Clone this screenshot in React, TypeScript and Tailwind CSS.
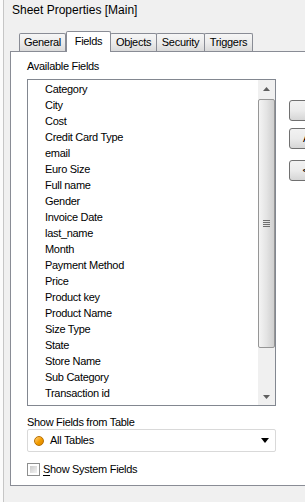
import React from 'react';

const fields = [
  'Category',
  'City',
  'Cost',
  'Credit Card Type',
  'email',
  'Euro Size',
  'Full name',
  'Gender',
  'Invoice Date',
  'last_name',
  'Month',
  'Payment Method',
  'Price',
  'Product key',
  'Product Name',
  'Size Type',
  'State',
  'Store Name',
  'Sub Category',
  'Transaction id',
];

const tabs = [
  { label: 'General', w: 'w-[47px]' },
  { label: 'Fields', w: 'w-[45px]', active: true },
  { label: 'Objects', w: 'w-[47px]' },
  { label: 'Security', w: 'w-[49px]' },
  { label: 'Triggers', w: 'w-[49px]' },
];

function Tab({ label, w, active }: { label: string; w: string; active?: boolean }) {
  if (active) {
    return (
      <div
        className={`${w} h-[21px] -mb-px relative z-10 bg-white border border-b-0 border-[#898c95] rounded-t-[2px] flex items-center justify-center pb-[2px]`}
      >
        {label}
      </div>
    );
  }
  return (
    <div
      className={`${w} h-[18px] -ml-px first:ml-0 bg-gradient-to-b from-[#f6f6f6] via-[#ececec] to-[#dadada] border border-b-0 border-[#898c95] rounded-t-[2px] flex items-center justify-center`}
    >
      {label}
    </div>
  );
}

function ScrollBar() {
  return (
    <div className="w-[17px] h-full bg-[#f0f0f0] flex flex-col">
      {/* up arrow */}
      <div className="h-[18px] flex items-center justify-center">
        <svg width="7" height="4" viewBox="0 0 7 4">
          <path d="M0 4 L3.5 0 L7 4 Z" fill="#5f5f5f" />
        </svg>
      </div>
      {/* thumb */}
      <div className="mx-0 mt-[1px] h-[249px] rounded-[2px] border border-[#969696] bg-gradient-to-r from-[#f4f4f4] via-[#e4e4e4] to-[#cfcfcf] flex items-center justify-center">
        <div className="flex flex-col gap-[1px]">
          <div className="w-[7px] h-[1px] bg-[#6f6f6f]" />
          <div className="w-[7px] h-[1px] bg-[#6f6f6f]" />
          <div className="w-[7px] h-[1px] bg-[#6f6f6f]" />
          <div className="w-[7px] h-[1px] bg-[#6f6f6f]" />
        </div>
      </div>
      <div className="flex-1" />
      {/* down arrow */}
      <div className="h-[17px] flex items-center justify-center">
        <svg width="7" height="4" viewBox="0 0 7 4">
          <path d="M0 0 L7 0 L3.5 4 Z" fill="#5f5f5f" />
        </svg>
      </div>
    </div>
  );
}

function SideButton({ label }: { label: string }) {
  return (
    <div className="w-[75px] h-[21px] rounded-[3px] border border-[#707070] bg-gradient-to-b from-[#f2f2f2] via-[#ebebeb] to-[#d6d6d6] flex items-center justify-center whitespace-nowrap">
      {label}
    </div>
  );
}

export default function App() {
  return (
    <div
      className="w-[305px] h-[502px] overflow-hidden bg-[#fbfbfb] pl-[3px] text-[11px] tracking-[-0.3px] text-black"
      style={{ fontFamily: '"Liberation Sans", Arial, sans-serif' }}
    >
      <div className="h-full border-l border-[#c6c6c6] bg-[#f0f0f0] flex flex-col">
        {/* title */}
        <div className="h-[31px] pl-[8px] text-[12px] tracking-normal leading-[18px] pt-[1px]">
          Sheet Properties [Main]
        </div>

        <div className="pl-[6px]">
          {/* tab strip */}
          <div className="flex items-end pl-[9px] h-[20px]">
            {tabs.map((t) => (
              <Tab key={t.label} {...t} />
            ))}
          </div>

          {/* panel */}
          <div className="w-[420px] h-[435px] bg-white border border-[#898c95] pl-[16px] pt-[7px]">
            <div className="leading-[14px]">Available Fields</div>

            <div className="flex mt-[6px]">
              <div className="w-[249px] h-[327px] border border-[#828790] flex">
                <div className="flex-1 pl-[17px] pt-[1px]">
                  {fields.map((f) => (
                    <div key={f} className="h-[16px] leading-[16px] whitespace-nowrap">
                      {f}
                    </div>
                  ))}
                </div>
                <ScrollBar />
              </div>

              <div className="ml-[13px] mt-[21px] flex flex-col">
                <SideButton label="Add >" />
                <div className="mt-[7px]">
                  <SideButton label="Add All >>" />
                </div>
                <div className="mt-[11px]">
                  <SideButton label="< Remove" />
                </div>
              </div>
            </div>

            <div className="mt-[9px] leading-[14px]">Show Fields from Table</div>

            <div className="w-[249px] h-[23px] border border-[#d9d9d9] rounded-[2px] flex items-center pl-[6px] pr-[6px]">
              <div className="w-[10px] h-[10px] rounded-full border border-[#b86f00] bg-gradient-to-br from-[#ffd36a] via-[#f5a000] to-[#d98200]" />
              <div className="ml-[6px] flex-1">All Tables</div>
              <svg width="8" height="5" viewBox="0 0 8 5">
                <path d="M0 0 L8 0 L4 5 Z" fill="#000" />
              </svg>
            </div>

            <div className="mt-[10px] flex items-center">
              <div className="w-[13px] h-[13px] border border-[#8e8f8f] bg-white p-[2px]">
                <div className="w-full h-full bg-gradient-to-br from-[#cbcbcb] to-[#f3f3f3]" />
              </div>
              <div className="ml-[3px] leading-[14px]">
                <span className="underline underline-offset-[2px]">S</span>how System Fields
              </div>
            </div>
          </div>
        </div>
      </div>
    </div>
  );
}
